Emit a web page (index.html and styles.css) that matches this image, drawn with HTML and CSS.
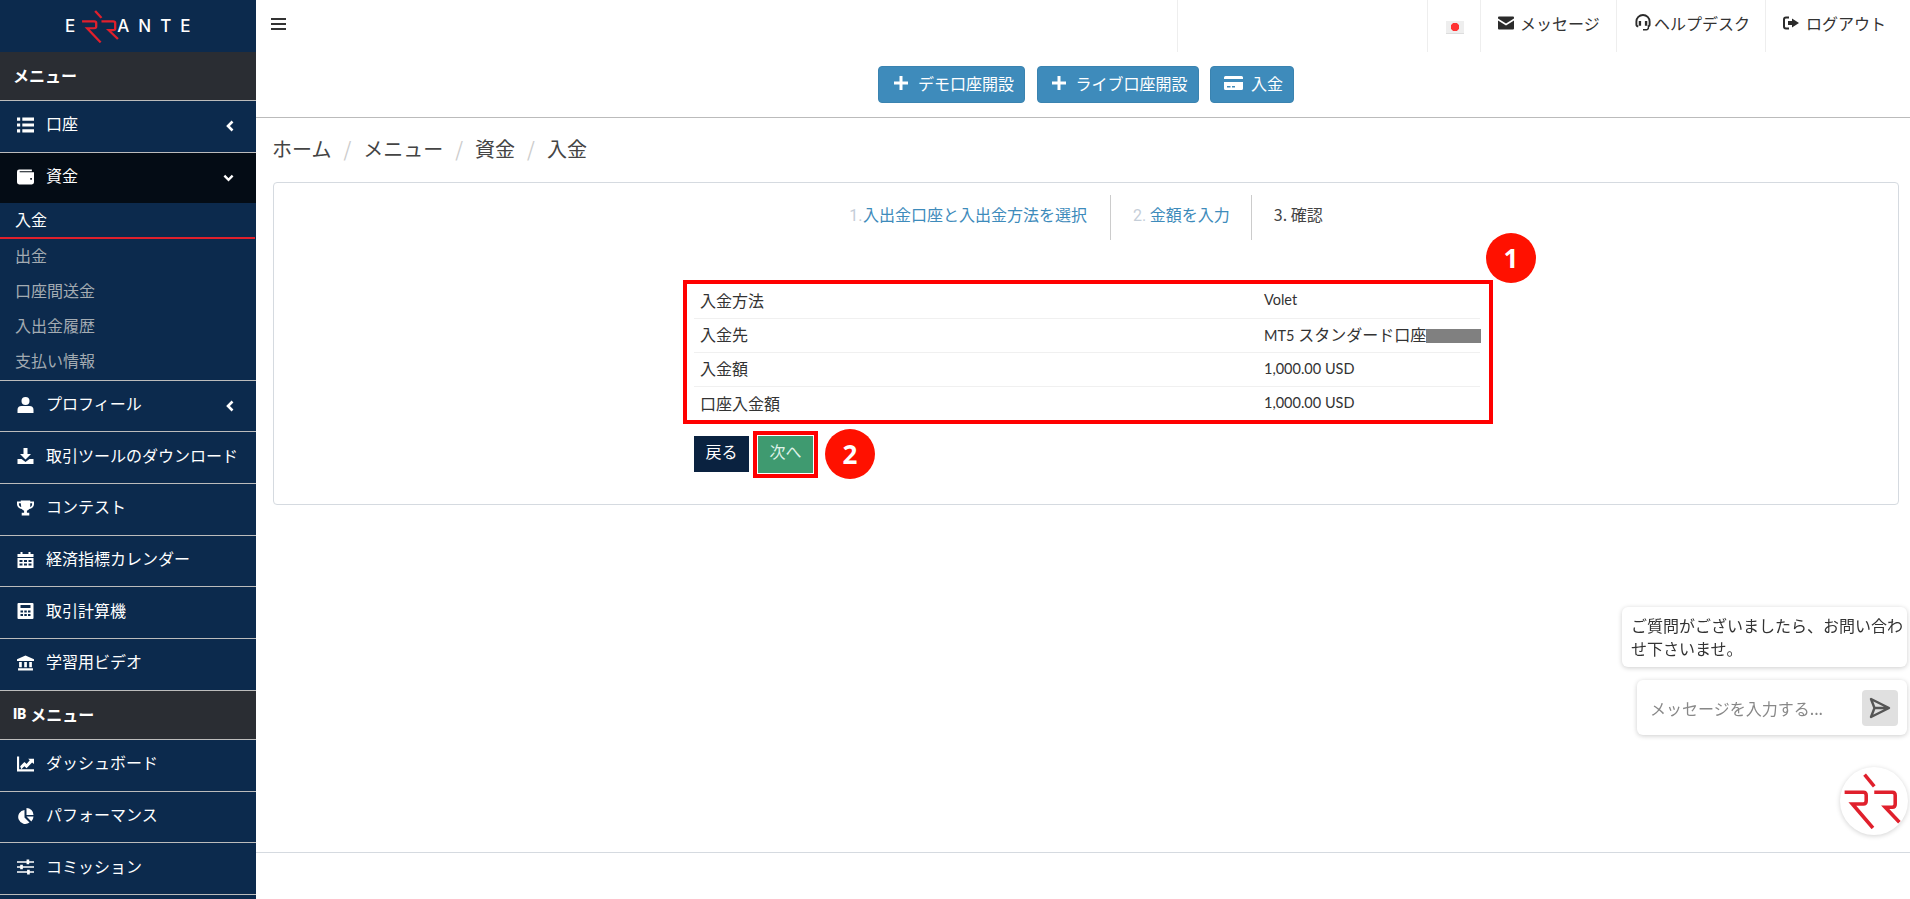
FILE: index.html
```html
<!DOCTYPE html>
<html lang="ja">
<head>
  <meta charset="UTF-8" />
  <meta name="viewport" content="width=device-width, initial-scale=1.0" />
  <title>入金</title>
  <link rel="stylesheet" href="styles.css">
</head>
<body>

<svg class="defs" width="0" height="0">
  <symbol id="marca" viewBox="725 545 180 172" preserveAspectRatio="none">
    <g fill="none" stroke="#e0202c" stroke-width="11">
      <path d="M792 550l30 36" />
      <path d="M730 604h58q9 0 9 9v18q0 9-9 9h-34l64 74" />
      <path d="M822 604h56q9 0 9 9v28q0 9-9 9h-22l44 46" />
    </g>
  </symbol>
</svg>

<div class="container">
  <aside class="menu-lateral">
    <div class="logo">
      <span>E</span>
      <svg class="logo-rr"><use href="#marca" /></svg>
      <span class="logo-fim">ANTE</span>
    </div>

    <div class="menu-titulo">メニュー</div>
    <a class="menu-item">
      <svg class="ico" viewBox="0 0 16 14"><path d="M0 0h3v3H0zM5 0h11v3H5zM0 5.500h3v3H0zM5 5.500h11v3H5zM0 11h3v3H0zM5 11h11v3H5z" /></svg>
      口座
      <svg class="seta" viewBox="0 0 8 12"><path d="M6.500 1.500L2 6l4.500 4.500" /></svg>
    </a>
    <a class="menu-item ativo">
      <svg class="ico" viewBox="0 0 16 14"><path d="M2 0h12v1.500H2.500v1H16V12a2 2 0 0 1-2 2H2a2 2 0 0 1-2-2V2a2 2 0 0 1 2-2zM12.500 8v1.500H14V8z" fill-rule="evenodd" /></svg>
      資金
      <svg class="seta seta-baixo" viewBox="0 0 12 8"><path d="M1.500 1.500L6 6l4.500-4.500" /></svg>
    </a>
    <div class="submenu">
      <a class="sub-item ativo">入金</a>
      <a class="sub-item">出金</a>
      <a class="sub-item">口座間送金</a>
      <a class="sub-item">入出金履歴</a>
      <a class="sub-item">支払い情報</a>
    </div>
    <a class="menu-item">
      <svg class="ico" viewBox="0 0 16 16"><circle cx="8" cy="4" r="4" /><path d="M0 16v-3a4 4 0 0 1 4-4h8a4 4 0 0 1 4 4v3z" /></svg>
      プロフィール
      <svg class="seta" viewBox="0 0 8 12"><path d="M6.500 1.500L2 6l4.500 4.500" /></svg>
    </a>
    <a class="menu-item">
      <svg class="ico" viewBox="0 0 16 16"><path d="M6 0h4v6h3.500L8 11.500 2.500 6H6zM0 11h4l4 3 4-3h4v5H0z" /></svg>
      取引ツールのダウンロード
    </a>
    <a class="menu-item">
      <svg class="ico" viewBox="0 0 18 16"><path d="M4 0h10v1h4v3c0 3-2.500 4.500-5 5-.7 1-1.500 1.500-2.500 2v2H13v3H5v-3h2.500v-2C6.500 10.500 5.700 10 5 9 2.500 8.500 0 7 0 4V1h4zM4 3H2v1c0 1.500 1 2.500 2.500 3zM14 3v4C15 6.500 16 5.500 16 4V3z" fill-rule="evenodd" /></svg>
      コンテスト
    </a>
    <a class="menu-item">
      <svg class="ico" viewBox="0 0 16 16"><path d="M3 0h2v2h6V0h2v2h3v3H0V2h3zM0 6h16v10H0zM2 8v2h3V8zM6.500 8v2h3V8zM11 8v2h3V8zM2 11.500v2h3v-2zM6.500 11.500v2h3v-2zM11 11.500v2h3v-2z" fill-rule="evenodd" /></svg>
      経済指標カレンダー
    </a>
    <a class="menu-item">
      <svg class="ico" viewBox="0 0 16 16"><path d="M1 0h14a1 1 0 0 1 1 1v14a1 1 0 0 1-1 1H1a1 1 0 0 1-1-1V1a1 1 0 0 1 1-1zM3 2v3h10V2zM3 7.500v2h2.500v-2zM6.800 7.500v2h2.500v-2zM10.500 7.500v2H13v-2zM3 11v2h2.500v-2zM6.800 11v2h2.500v-2zM10.500 11v2H13v-2z" fill-rule="evenodd" /></svg>
      取引計算機
    </a>
    <a class="menu-item">
      <svg class="ico" viewBox="0 0 16 14"><path d="M8 0l8 3.500V5H0V3.500zM2 6h2.500v5H2zM6.800 6h2.500v5H6.800zM11.500 6H14v5h-2.500zM1 12h14v2H1z" /></svg>
      学習用ビデオ
    </a>

    <div class="menu-titulo menu-titulo-ib"><b class="ib">IB</b> メニュー</div>
    <a class="menu-item">
      <svg class="ico" viewBox="0 0 16 14"><path d="M0 0h2v12h14v2H0zM3 9l4-4 2 2 3-3.500L10.500 2H16v5l-1.800-1.500L9 11 7 9l-3 3z" /></svg>
      ダッシュボード
    </a>
    <a class="menu-item">
      <svg class="ico" viewBox="0 0 16 16"><path d="M7 2v7.500l5 5A7 7 0 1 1 7 2zM9 0a7 7 0 0 1 7 7H9zM9 8.500h7a7 7 0 0 1-2.200 5z" /></svg>
      パフォーマンス
    </a>
    <a class="menu-item">
      <svg class="ico" viewBox="0 0 16 14"><path d="M0 1.500h9V0h2.500v1.500H16v1.500h-4.500v1.500H9V3H0zM0 6.200h3V4.800h2.500v1.400H16v1.500H5.500v1.500H3V7.700H0zM0 11h9.500V9.500H12V11h4v1.500h-4V14H9.500v-1.500H0z" /></svg>
      コミッション
    </a>
  </aside>

  <div class="conteudo">
    <header class="topo">
      <svg class="hamburguer" viewBox="0 0 15 12"><path d="M0 0h15v2H0zM0 5h15v2H0zM0 10h15v2H0z" /></svg>
      <nav class="topo-nav">
        <div class="topo-vazio"></div>
        <a class="topo-item topo-bandeira"><span class="bandeira"></span></a>
        <a class="topo-item topo-msg">
          <svg class="ico-topo" viewBox="0 0 16 13"><path d="M1 0h14a1 1 0 0 1 1 1v1L8 7 0 2V1a1 1 0 0 1 1-1zM0 4l8 5 8-5v8a1 1 0 0 1-1 1H1a1 1 0 0 1-1-1z" /></svg>
          メッセージ
        </a>
        <a class="topo-item topo-ajuda">
          <svg class="ico-topo" viewBox="0 0 16 18"><path d="M8 0a8 8 0 0 1 8 8v3a3 3 0 0 1-3 3v-2a1 1 0 0 0 1-1V8A6 6 0 0 0 2 8v3a1 1 0 0 0 1 1v2a3 3 0 0 1-3-3V8a8 8 0 0 1 8-8zM3.500 7.500H6v5H3.500zM10 7.500h2.500v5H10zM13 14h1.500a3 3 0 0 1-3 3.500H8V16h3.500c.8 0 1.500-1 1.500-2z" /></svg>
          ヘルプデスク
        </a>
        <a class="topo-item topo-sair">
          <svg class="ico-topo" viewBox="0 0 16 13"><path d="M3 0h3v2H3a1 1 0 0 0-1 1v7a1 1 0 0 0 1 1h3v2H3a3 3 0 0 1-3-3V3a3 3 0 0 1 3-3zM9 2l7 4.500L9 11V8.500H5v-4h4z" /></svg>
          ログアウト
        </a>
      </nav>
    </header>

    <div class="acoes">
      <button class="btn-acao btn-demo">
        <svg class="ico-btn" viewBox="0 0 14 14"><path d="M5.500 0h3v5.500H14v3H8.500V14h-3V8.500H0v-3h5.500z" /></svg>
        デモ口座開設
      </button>
      <button class="btn-acao btn-live">
        <svg class="ico-btn" viewBox="0 0 14 14"><path d="M5.500 0h3v5.500H14v3H8.500V14h-3V8.500H0v-3h5.500z" /></svg>
        ライブ口座開設
      </button>
      <button class="btn-acao btn-entrada">
        <svg class="ico-cartao" viewBox="0 0 19 14"><path d="M1.500 0h16A1.500 1.500 0 0 1 19 1.500V3H0V1.500A1.500 1.500 0 0 1 1.500 0zM0 6h19v6.500a1.500 1.500 0 0 1-1.500 1.500h-16A1.500 1.500 0 0 1 0 12.500zM3 10v1.500h3.500V10zM8 10v1.500h3V10z" fill-rule="evenodd" /></svg>
        入金
      </button>
    </div>

    <div class="trilha">
      <span>ホーム</span><i>/</i><span>メニュー</span><i>/</i><span>資金</span><i>/</i><span>入金</span>
    </div>

    <section class="cartao">
      <div class="passos">
        <div class="passo passo-um"><em>1.</em> <a>入出金口座と入出金方法を選択</a></div>
        <div class="passo passo-dois"><em>2.</em> <a>金額を入力</a></div>
        <div class="passo passo-atual">3. 確認</div>
      </div>

      <div class="resumo">
        <div class="circulo circulo-um">1</div>
        <div class="linha"><span>入金方法</span><span>Volet</span></div>
        <div class="linha"><span>入金先</span><span>MT5 <span class="cjk">スタンダード口座</span><b class="oculto"></b></span></div>
        <div class="linha"><span>入金額</span><span>1,000.00 USD</span></div>
        <div class="linha"><span>口座入金額</span><span>1,000.00 USD</span></div>
      </div>

      <div class="botoes">
        <button class="btn-voltar">戻る</button>
        <div class="marca-vermelha"><button class="btn-proximo">次へ</button></div>
        <div class="circulo">2</div>
      </div>
    </section>

    <footer class="rodape"></footer>
  </div>
</div>

<div class="chat">
  <div class="chat-balao">ご質問がございましたら、お問い合わせ下さいませ。</div>
  <div class="chat-campo">
    <input type="text" placeholder="メッセージを入力する..." />
    <button class="chat-enviar">
      <svg viewBox="0 0 24 24"><path d="M3 3l18 9-18 9 3.500-9zM6.500 12H21" /></svg>
    </button>
  </div>
  <div class="chat-avatar"><svg><use href="#marca" /></svg></div>
</div>

</body>
</html>
```

FILE: styles.css
```css
* {
  box-sizing: border-box;
}
body {
  margin: 0;
  height: 100vh;
  overflow: hidden;
  background: #fff;
  color: #333;
  font-family: "Noto Sans CJK JP", "Noto Sans", sans-serif;
  font-size: 16px;
}
.defs {
  position: absolute;
}
.container {
  display: flex;
  height: 100vh;
}

/* menu lateral */
.menu-lateral {
  width: 256px;
  flex-shrink: 0;
  background: #0c2a4d;
  color: #fff;
  overflow: hidden;
}
.logo {
  height: 52px;
  display: flex;
  align-items: center;
  padding-left: 65px;
  font-family: "Inter", sans-serif;
  font-size: 17px;
  font-weight: 500;
  letter-spacing: 9px;
}
.logo-rr {
  width: 38px;
  height: 33px;
  margin: 0 -2px 0 -3px;
}
.menu-titulo {
  height: 49px;
  padding: 0 13px 2px;
  display: flex;
  align-items: center;
  background: #2a2d33;
  border-bottom: 1px solid #bcbcbc;
  font-weight: 700;
}
.menu-titulo-ib {
  gap: 4px;
}
.ib {
  font-family: "Roboto", sans-serif;
  font-size: 14px;
  font-weight: 900;
}
.menu-item {
  position: relative;
  height: 51.7px;
  padding: 0 0 6px 46px;
  display: flex;
  align-items: center;
  border-bottom: 1px solid #bcbcbc;
}
.menu-item.ativo {
  height: 50px;
  background: #040c15;
  border-bottom: 0;
}
.ico {
  position: absolute;
  left: 17px;
  top: 16px;
  width: 17px;
  height: 16px;
  fill: #fff;
}
.seta {
  position: absolute;
  left: 226px;
  top: 19px;
  width: 8px;
  height: 12px;
  fill: none;
  stroke: #fff;
  stroke-width: 2.6;
}
.seta-baixo {
  left: 223px;
  top: 21px;
  width: 11px;
  height: 8px;
}
.submenu {
  border-bottom: 1px solid #bcbcbc;
  padding-bottom: 1px;
}
.sub-item {
  display: block;
  height: 35px;
  line-height: 32px;
  padding-left: 15px;
  color: #a3abb2;
}
.sub-item.ativo {
  height: 36px;
  color: #fff;
  margin-right: 1px;
  border-bottom: 2px solid #e0202c;
}

/* topo */
.conteudo {
  flex-grow: 1;
  display: flex;
  flex-direction: column;
}
.topo {
  height: 52px;
  flex-shrink: 0;
  display: flex;
  justify-content: space-between;
  align-items: flex-start;
}
.hamburguer {
  width: 15px;
  height: 12px;
  margin: 18px 0 0 15px;
  fill: #333;
}
.topo-nav {
  display: flex;
  height: 52px;
}
.topo-vazio {
  width: 250px;
  border-left: 1px solid #eee;
}
.topo-item {
  display: flex;
  align-items: center;
  border-left: 1px solid #eee;
  padding: 0 0 7px 18px;
  white-space: nowrap;
}
.topo-bandeira {
  width: 53px;
}
.topo-msg {
  width: 136px;
  padding-left: 17px;
  gap: 6px;
}
.topo-ajuda {
  width: 149px;
  gap: 3px;
}
.topo-sair {
  width: 145px;
  padding-left: 17px;
  gap: 7px;
}
.bandeira {
  position: relative;
  top: 5px;
  width: 18px;
  height: 13px;
  background: radial-gradient(circle, #f33 4px, #eee 4.500px);
  border-bottom: 1px solid #ddd;
}
.ico-topo {
  width: 16px;
  height: 14px;
  flex-shrink: 0;
  fill: #2b2b2b;
}
.topo-ajuda .ico-topo {
  height: 17px;
}

/* botoes de acao */
.acoes {
  height: 66px;
  flex-shrink: 0;
  display: flex;
  justify-content: center;
  gap: 11.500px;
  padding: 14px 0 0 6px;
  border-bottom: 1px solid #bbb;
}
.btn-acao {
  height: 37px;
  display: flex;
  align-items: center;
  background: #3e8bbb;
  color: #fff;
  border: 1px solid #3a83b0;
  border-radius: 4px;
  font-family: inherit;
  font-size: 16px;
  padding: 0 0 3px 15px;
}
.btn-demo {
  width: 147px;
  gap: 10px;
}
.btn-live {
  width: 162px;
  padding-left: 14px;
  gap: 10px;
}
.btn-entrada {
  width: 84px;
  padding-left: 13px;
  gap: 8px;
}
.ico-btn {
  width: 14px;
  height: 14px;
  fill: #fff;
  flex-shrink: 0;
}
.ico-cartao {
  width: 19px;
  height: 14px;
  fill: #fff;
  flex-shrink: 0;
}

/* trilha */
.trilha {
  height: 64px;
  flex-shrink: 0;
  padding: 15px 0 0 16px;
  font-size: 20px;
  line-height: 32px;
  color: #444;
  display: flex;
}
.trilha i {
  color: #ccc;
  font-style: normal;
  padding: 0 12px;
}

/* cartao */
.cartao {
  height: 323px;
  flex-shrink: 0;
  margin: 0 11px 0 17px;
  padding-top: 12px;
  border: 1px solid #d5dae0;
  border-radius: 4px;
}
.passos {
  display: flex;
  justify-content: center;
  height: 45px;
  padding-right: 2px;
}
.passo {
  padding: 6px 23px 0 22px;
  border-right: 1px solid #ccc;
  line-height: 26px;
}
.passo em {
  font-style: normal;
  color: #c5ced8;
  font-family: "Roboto", sans-serif;
}
.passo a {
  color: #3e8bbb;
}
.passo-um {
  padding-left: 25px;
}
.passo-um em {
  margin-right: -3px;
}
.passo-dois {
  padding-right: 21px;
}
.passo-atual {
  border-right: 0;
  color: #444;
}
.resumo {
  position: relative;
  width: 810px;
  height: 144px;
  margin: 40px 0 0 409px;
  padding: 0 9px 0 7px;
  border: 4px solid #f00;
}
.linha {
  display: grid;
  grid-template-columns: 564px 1fr;
  height: 34px;
  padding: 0 0 3px 6px;
  align-items: center;
  border-bottom: 1px solid #f0f0f0;
  font-family: "Lato", "Noto Sans CJK JP", sans-serif;
  font-size: 14.500px;
  color: #333;
  white-space: nowrap;
}
.linha span:first-child {
  font-size: 16px;
}
.linha .cjk {
  font-size: 16px;
}
.linha:last-child {
  border-bottom: 0;
}
.circulo + .linha {
  height: 35px;
}
.oculto {
  display: inline-block;
  width: 55px;
  height: 14px;
  margin-left: 0;
  vertical-align: -2px;
  background: #808080;
}
.circulo {
  width: 50px;
  height: 50px;
  border-radius: 50%;
  display: flex;
  align-items: center;
  justify-content: center;
  background: #ff1100;
  color: #fff;
  font-family: "Noto Sans", sans-serif;
  font-size: 26px;
  font-weight: 700;
  flex-shrink: 0;
}
.circulo-um {
  position: absolute;
  top: -51px;
  right: -47px;
}
.botoes {
  display: flex;
  align-items: center;
  gap: 4px;
  height: 50px;
  margin: 5px 0 0 420px;
}
.btn-voltar {
  width: 55px;
  height: 36px;
  background: #0a2240;
  color: #fff;
  border: 0;
  font-family: inherit;
  font-size: 16px;
  padding: 0 0 6px;
}
.marca-vermelha {
  padding: 1px;
  background: #fff;
  border: 4px solid #f00;
  height: 47px;
  width: 65px;
}
.btn-proximo {
  display: block;
  width: 100%;
  height: 100%;
  background: #3f9a70;
  color: #dff2e8;
  border: 0;
  font-family: inherit;
  font-size: 16px;
  padding: 0 0 6px;
}
.botoes .circulo {
  margin-left: 3px;
}
.rodape {
  margin-top: auto;
  height: 47px;
  border-top: 1px solid #d5dae0;
}

/* chat */
.chat {
  position: fixed;
  right: 3px;
  top: 607px;
  display: flex;
  flex-direction: column;
  align-items: flex-end;
}
.chat-balao {
  width: 285px;
  height: 60px;
  padding: 7px 4px 7px 9px;
  background: #fff;
  border-radius: 6px;
  box-shadow: 0 1px 5px rgba(0, 0, 0, 0.2);
  line-height: 23px;
  color: #333;
}
.chat-campo {
  width: 270px;
  height: 55px;
  margin-top: 13px;
  padding: 10px 9px 9px 13px;
  display: flex;
  justify-content: space-between;
  background: #fff;
  border-radius: 6px;
  box-shadow: 0 1px 5px rgba(0, 0, 0, 0.2);
}
.chat-campo input {
  width: 200px;
  border: 0;
  outline: 0;
  padding: 0;
  font-family: inherit;
  font-size: 16px;
  background: transparent;
}
.chat-campo input::placeholder {
  color: #888;
}
.chat-enviar {
  width: 36px;
  height: 36px;
  padding: 6px;
  border: 0;
  border-radius: 4px;
  background: #e0e0e0;
}
.chat-enviar svg {
  display: block;
  width: 24px;
  height: 24px;
  fill: none;
  stroke: #555;
  stroke-width: 2.4;
  stroke-linejoin: round;
}
.chat-avatar {
  width: 68px;
  height: 68px;
  margin: 32px -1px 0 0;
  padding: 6px 7px 6px 3px;
  background: #fff;
  border-radius: 50%;
  box-shadow: 0 1px 5px rgba(0, 0, 0, 0.18);
}
.chat-avatar svg {
  display: block;
  width: 100%;
  height: 100%;
}
```
